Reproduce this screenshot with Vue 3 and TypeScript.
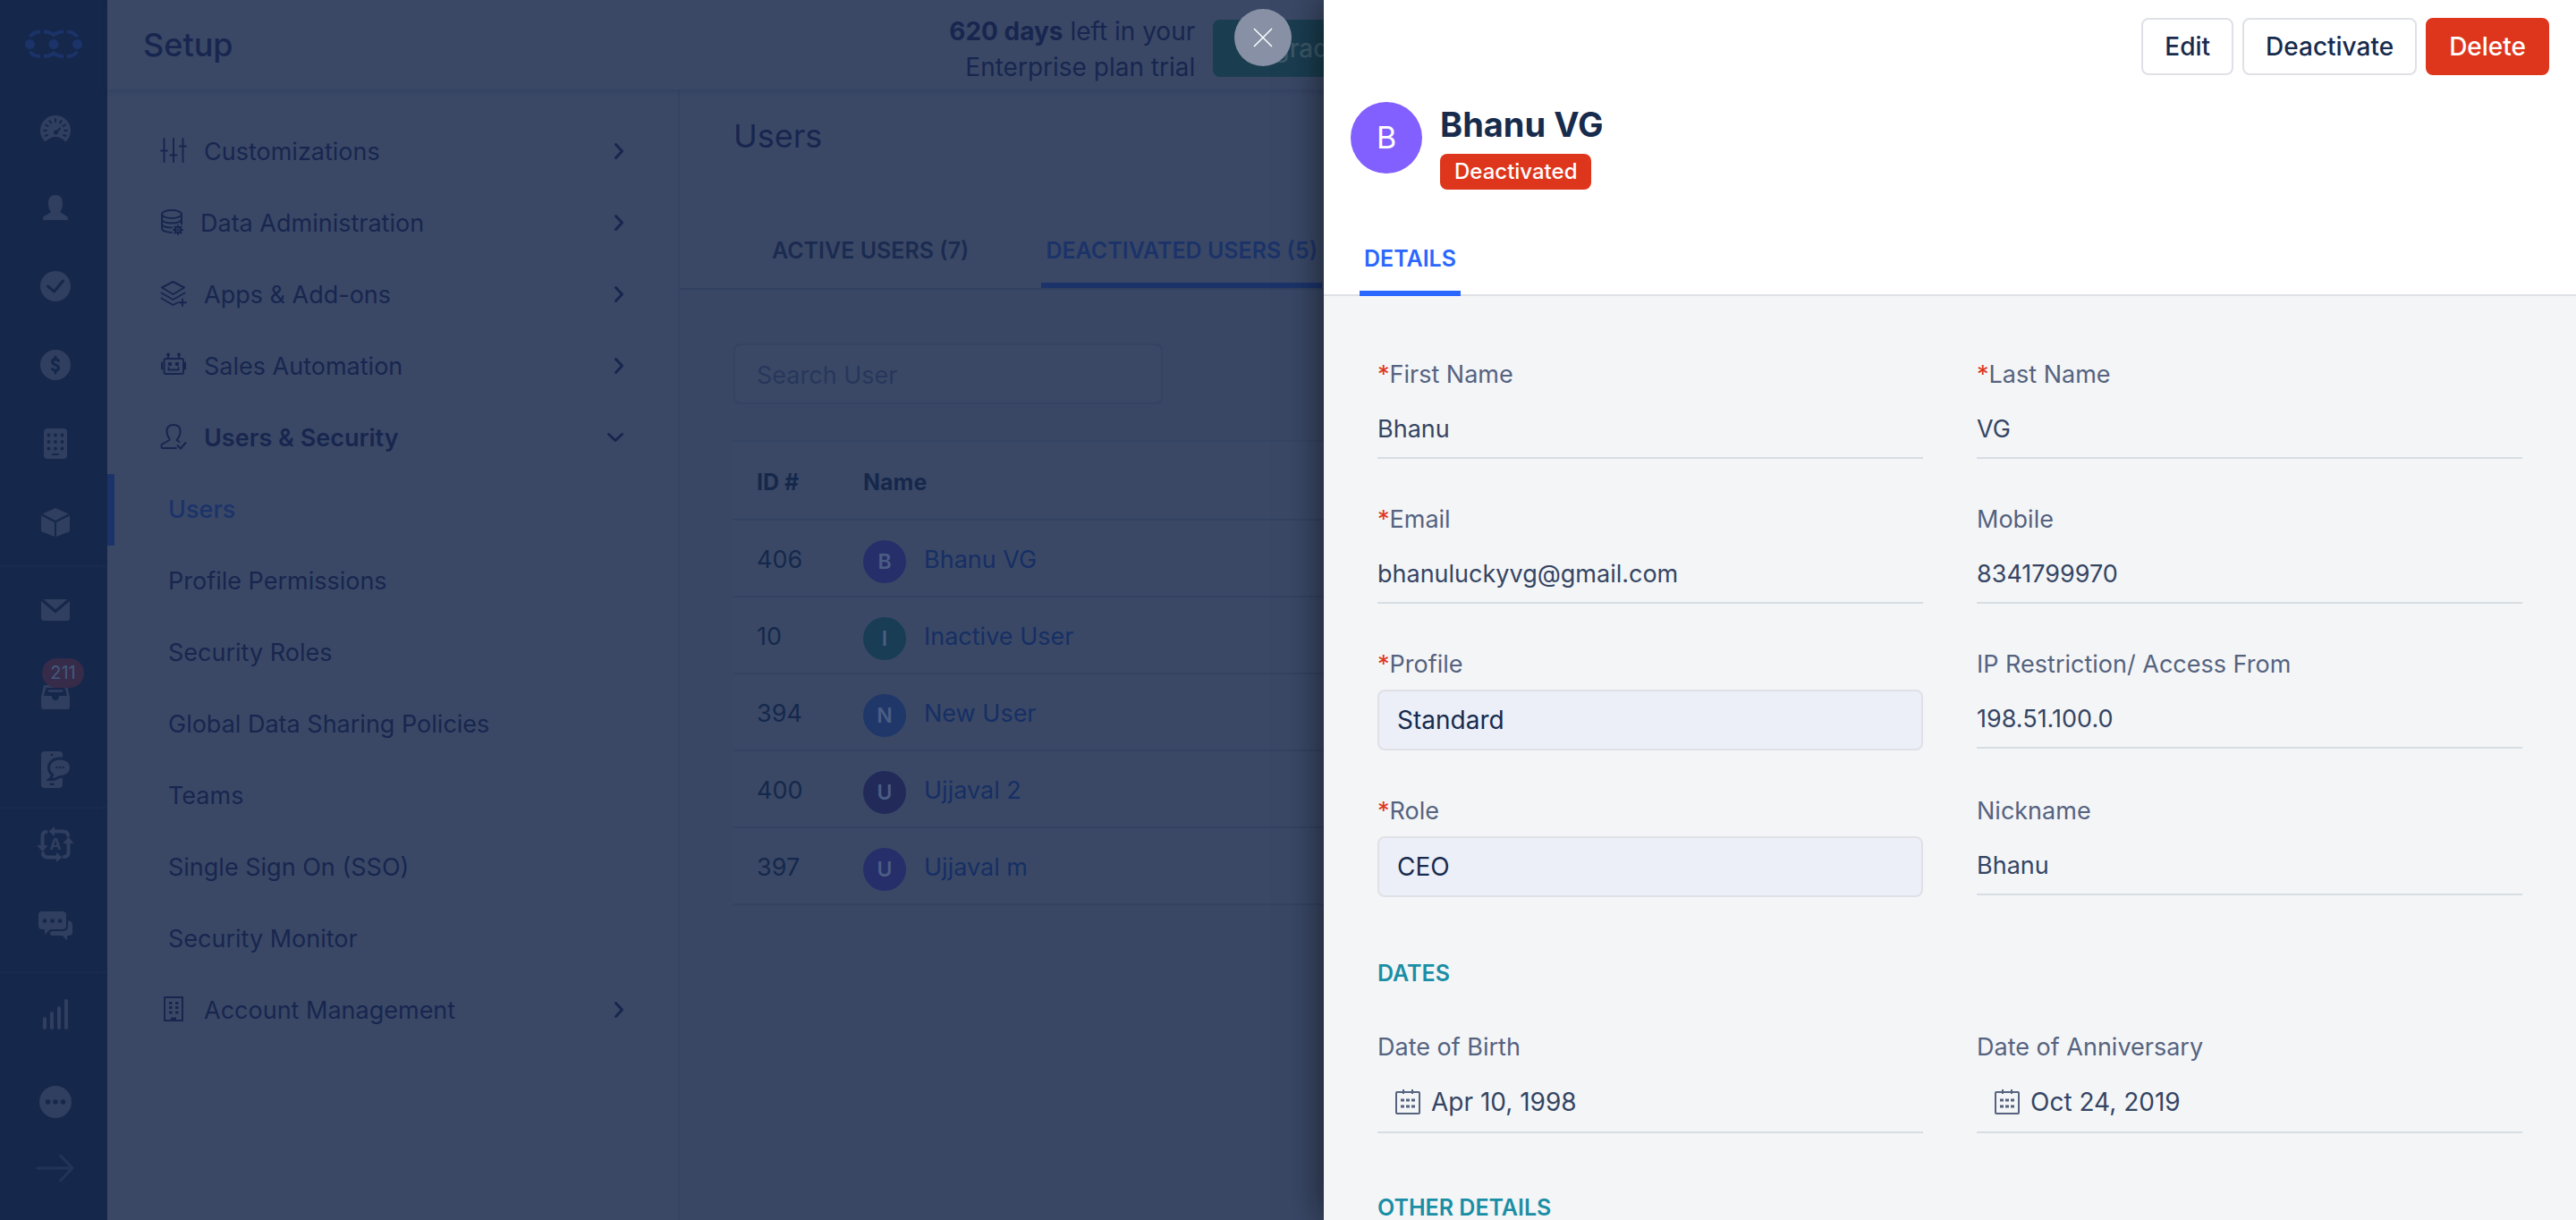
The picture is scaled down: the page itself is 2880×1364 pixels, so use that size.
<script setup lang="ts">
import { ref } from 'vue'

interface UserRow {
  id: number
  name: string
  tone: string
}

interface Field {
  id: string
  label: string
  value: string
  required?: boolean
  kind: 'text' | 'select' | 'date'
}

const securityLinks: string[] = [
  'Users',
  'Profile Permissions',
  'Security Roles',
  'Global Data Sharing Policies',
  'Teams',
  'Single Sign On (SSO)',
  'Security Monitor',
]

const users: UserRow[] = [
  { id: 406, name: 'Bhanu VG', tone: 'violet' },
  { id: 10, name: 'Inactive User', tone: 'teal' },
  { id: 394, name: 'New User', tone: 'blue' },
  { id: 400, name: 'Ujjaval 2', tone: 'purple' },
  { id: 397, name: 'Ujjaval m', tone: 'violet' },
]

const basics: Field[] = [
  { id: 'first-name', label: 'First Name', value: 'Bhanu', required: true, kind: 'text' },
  { id: 'last-name', label: 'Last Name', value: 'VG', required: true, kind: 'text' },
  { id: 'email', label: 'Email', value: 'bhanuluckyvg@gmail.com', required: true, kind: 'text' },
  { id: 'mobile', label: 'Mobile', value: '8341799970', kind: 'text' },
  { id: 'profile', label: 'Profile', value: 'Standard', required: true, kind: 'select' },
  { id: 'ip', label: 'IP Restriction/ Access From', value: '198.51.100.0', kind: 'text' },
  { id: 'role', label: 'Role', value: 'CEO', required: true, kind: 'select' },
  { id: 'nickname', label: 'Nickname', value: 'Bhanu', kind: 'text' },
]

const dates: Field[] = [
  { id: 'birth', label: 'Date of Birth', value: 'Apr 10, 1998', kind: 'date' },
  { id: 'anniversary', label: 'Date of Anniversary', value: 'Oct 24, 2019', kind: 'date' },
]

const search = ref('')
</script>

<template>
  <div class="screen">
    <div class="app">
      <nav class="rail" aria-label="Modules">
        <a class="logo" href="#" aria-label="Home">
          <svg width="64" height="34" viewBox="0 0 64 34">
            <g fill="currentColor"><circle cx="5.5" cy="16.500" r="5.500" /><circle cx="32" cy="16.500" r="5.500" /><circle cx="58.500" cy="16.500" r="5.500" /></g>
            <path d="M5.500 8Q10 2.500 17 2.500M21 2.500C27 2.500 29 3.500 32 6C35 3.500 37 2.500 43 2.500M47 2.500Q54 2.500 58.500 8M5.500 25Q10 30 17 30M21 30C27 30 29 29 32 26.500C35 29 37 30 43 30M47 30Q54 30 58.500 25" fill="none" stroke="currentColor" stroke-width="4" />
          </svg>
        </a>
        <div class="group group-main">
          <a href="#" aria-label="Dashboard">
            <svg width="34" height="30" viewBox="0 0 34 30">
              <path d="M5.500 29.500A17 17 0 1 1 28.500 29.500Q17 18.500 5.500 29.500Z" fill="currentColor" />
              <path class="cut" d="M17 4v3M10.500 6l1.500 2.500M23.500 6L22 8.500M6 10.500l2.500 1.500M28 10.500L25.500 12M4 17h3M27 17h3M5.500 23l2.500-1M28.500 23L26 22M18 19l4-4.500" />
              <circle class="hole" cx="17.500" cy="19" r="2.500" />
            </svg>
          </a>
          <a href="#" aria-label="Contacts">
            <svg width="28" height="28" viewBox="0 0 28 28">
              <path d="M6 9C6 3 9 0 14 0s8 3 8 9c0 4-1 8-3 10l8 5q1 .7 1 2v1q0 1-1 1H1q-1 0-1-1v-1q0-1.300 1-2l8-5C7 17 6 13 6 9Z" fill="currentColor" />
            </svg>
          </a>
          <a href="#" aria-label="Tasks">
            <svg width="34" height="34" viewBox="0 0 34 34">
              <circle cx="17" cy="17" r="17" fill="currentColor" />
              <path class="cut thick" d="M8.500 17l7 6 10-12" />
            </svg>
          </a>
          <a href="#" aria-label="Deals">
            <svg width="34" height="34" viewBox="0 0 34 34">
              <circle cx="17" cy="17" r="17" fill="currentColor" />
              <path class="cut thick" d="M20.500 12.500Q19.500 10.800 17 10.800C14.500 10.800 13.500 12.300 13.500 13.700C13.500 17.300 20.500 16.300 20.500 20C20.500 22 19 23.200 17 23.200Q14.500 23.200 13.500 21.500M17 8v2.500M17 23.500v2.500" />
            </svg>
          </a>
          <a href="#" aria-label="Companies">
            <svg width="26" height="34" viewBox="0 0 26 34">
              <rect width="26" height="34" rx="4" fill="currentColor" />
              <g class="hole"><circle v-for="n in 9" :key="n" :cx="5.5 + ((n - 1) % 3) * 7.5" :cy="7.5 + Math.floor((n - 1) / 3) * 7.5" r="1.900" /><rect x="9" y="28" width="8" height="2" rx="1" /></g>
            </svg>
          </a>
          <a href="#" aria-label="Products">
            <svg width="32" height="32" viewBox="0 0 32 32" fill="currentColor">
              <path d="M16 0l14.500 6.500L16 14 1.500 6.500ZM0 8.500l15 7.500v16L1 26.500Q0 26 0 25ZM32 8.500L17 16v16l14-5.500q1-.5 1-1.500Z" />
            </svg>
          </a>
        </div>
        <div class="group group-comm">
          <a href="#" aria-label="Mail">
            <svg width="32" height="24" viewBox="0 0 32 24" fill="currentColor">
              <path d="M2.500 0h27L16 11.500ZM0 2l16 13.500L32 2v19q0 3-3 3H3q-3 0-3-3Z" />
            </svg>
          </a>
          <a href="#" class="inbox" aria-label="Inbox, 211 unread">
            <svg width="32" height="27" viewBox="0 0 32 27">
              <path d="M3 0h26l3 13v11q0 3-3 3H3q-3 0-3-3V13Z" fill="currentColor" />
              <path class="hole" d="M5.500 3h21L29 12h-9q0 5-4 5t-4-5H3Z" />
              <path d="M9 6.500h14" stroke="currentColor" stroke-width="2.500" stroke-linecap="round" />
            </svg>
            <span class="count">211</span>
          </a>
          <a href="#" aria-label="Phone">
            <svg width="32" height="41" viewBox="0 0 32 41">
              <rect width="24" height="41" rx="4" fill="currentColor" />
              <circle class="hole" cx="12" cy="4" r="1.300" /><rect class="hole" x="9.500" y="35.500" width="5" height="2.500" rx="1.200" />
              <path class="bubble" d="M21 9.500c7 0 11 4 11 8.500s-4 9-10 9q-3 0-4.500 1.500-2.500 1.500-5 1.500 2-2 1.500-4.500C11.500 24 10 21.500 10 18c0-4.500 4.500-8.500 11-8.500Z" fill="currentColor" />
              <g class="hole"><circle cx="17.500" cy="18" r="1.200" /><circle cx="21" cy="18" r="1.200" /><circle cx="24.500" cy="18" r="1.200" /></g>
            </svg>
          </a>
        </div>
        <div class="group group-auto">
          <a href="#" aria-label="Automation">
            <svg width="40" height="40" viewBox="0 0 40 40">
              <g fill="none" stroke="currentColor" stroke-width="4" stroke-linecap="round"><path d="M16 5.500h12q6 0 6 4.500M34.500 17v12q0 5-5 5M24 34.500H12q-6 0-6-4.500M5.500 23V11q0-5 4-5" /></g>
              <path d="M12.500 5.500L19 0v11ZM34.500 11.500L40.500 19h-12ZM27.500 34.500L21 40V29ZM5.500 28.500L-.5 21h12Z" fill="currentColor" />
              <text x="20" y="26" text-anchor="middle" font-size="18" font-weight="700" fill="currentColor">A</text>
            </svg>
          </a>
          <a href="#" aria-label="Chat">
            <svg width="38" height="32" viewBox="0 0 38 32">
              <path d="M4 0h23q4 0 4 4v12q0 4-4 4H13l-6 6v-6H4q-4 0-4-4V4q0-4 4-4ZM33 10.500q5 0 5 4.500v8q0 4-4 4h-2v5.500L26.500 27H16q-3 0-3-2.500t3-2.500h11q6 0 6-6Z" fill="currentColor" />
              <g class="hole"><circle cx="7" cy="10.500" r="2.300" /><circle cx="15.500" cy="10.500" r="2.300" /><circle cx="24" cy="10.500" r="2.300" /></g>
            </svg>
          </a>
        </div>
        <div class="group group-more">
          <a href="#" aria-label="Reports">
            <svg width="28" height="34" viewBox="0 0 28 34"><path d="M2 32V22M10 32V16M18 32V10M26 32V2" stroke="currentColor" stroke-width="4" stroke-linecap="round" /></svg>
          </a>
          <a href="#" aria-label="More">
            <svg width="36" height="36" viewBox="0 0 36 36">
              <circle cx="18" cy="18" r="18" fill="currentColor" />
              <g class="hole"><circle cx="9.500" cy="18" r="2.700" /><circle cx="18" cy="18" r="2.700" /><circle cx="26.500" cy="18" r="2.700" /></g>
            </svg>
          </a>
          <a href="#" class="faint" aria-label="Expand">
            <svg width="40" height="32" viewBox="0 0 40 32"><path d="M0 16h39M25.500 2L39 16 25.500 30" fill="none" stroke="currentColor" stroke-width="3" stroke-linecap="round" stroke-linejoin="round" /></svg>
          </a>
        </div>
      </nav>

      <div class="workspace">
        <header class="topbar">
          <h1>Setup</h1>
          <p class="trial"><strong>620 days</strong> left in your<br />Enterprise plan trial</p>
          <button type="button" class="upgrade">Upgrade</button>
        </header>

        <div class="columns">
          <aside class="menu">
            <a href="#" class="entry">
              <svg width="28" height="28" viewBox="0 0 28 28" class="line"><path d="M3.500 1v26M14 1v26M24.500 1v26M0 14.500h7M10.500 19.500h7M21 9.500h7" /></svg>
              <span>Customizations</span>
              <svg width="10" height="18" viewBox="0 0 10 18" class="chevron"><path d="M1.500 1.500L8.500 9 1.500 16.500" /></svg>
            </a>
            <a href="#" class="entry">
              <svg width="24" height="28" viewBox="0 0 24 28" class="line"><ellipse cx="12" cy="5.500" rx="11" ry="4.500" /><path d="M1 5.500v16c0 2 4.500 4 11 4.500M23 5.500v11M1 11c0 6 22 6 22 0M1 17c1 2 5 3.500 11 3.500" /><circle cx="19" cy="23" r="3.300" /><circle cx="19" cy="23" r=".6" /><path d="M19 18v1.500M19 26.500V28M14 23h1.500M22.500 23H24M15.500 19.500l1 1M21.500 25.500l1 1M22.500 19.500l-1 1M16.500 25.500l-1 1" /></svg>
              <span>Data Administration</span>
              <svg width="10" height="18" viewBox="0 0 10 18" class="chevron"><path d="M1.500 1.500L8.500 9 1.500 16.500" /></svg>
            </a>
            <a href="#" class="entry">
              <svg width="28" height="28" viewBox="0 0 28 28" class="line"><path d="M13.500 1L26 7.500 13.500 15 1 7.500ZM.5 13.500l13 7.500 13-7.500M.5 19.500l13 7.500 4.500-2.500M24 20.500v7.500M20 24.200h8" /></svg>
              <span>Apps &amp; Add-ons</span>
              <svg width="10" height="18" viewBox="0 0 10 18" class="chevron"><path d="M1.500 1.500L8.500 9 1.500 16.500" /></svg>
            </a>
            <a href="#" class="entry">
              <svg width="28" height="28" viewBox="0 0 28 28" class="line"><rect x="3.500" y="7" width="21.500" height="17" rx="2" /><path d="M8 2v5M20 2v5M1 11.500v7M27 11.500v7M8.500 17v2.500h11V17" /><g class="solid"><circle cx="8" cy="2.500" r="1" /><circle cx="20" cy="2.500" r="1" /><circle cx="10" cy="13" r="1.300" /><circle cx="18" cy="13" r="1.300" /></g></svg>
              <span>Sales Automation</span>
              <svg width="10" height="18" viewBox="0 0 10 18" class="chevron"><path d="M1.500 1.500L8.500 9 1.500 16.500" /></svg>
            </a>
            <a href="#" class="entry open">
              <svg width="28" height="28" viewBox="0 0 28 28" class="line"><path d="M17 27H2q-1.500 0-1.500-1.500V24q0-1 1-1.500L9.500 18V16.500C7.500 14 6.500 11.500 6.500 8c0-4 2.500-7 7.500-7s7.500 3 7.500 7c0 4-1.500 7.500-4 10l3 2M18.500 24l3.500 3.500L27.500 21" /></svg>
              <span>Users &amp; Security</span>
              <svg width="18" height="10" viewBox="0 0 18 10" class="chevron"><path d="M1.500 1.500L9 8.500 16.500 1.500" /></svg>
            </a>
            <a v-for="(link, i) in securityLinks" :key="link" href="#" class="entry sub" :class="{ current: i === 0 }">{{ link }}</a>
            <a href="#" class="entry">
              <svg width="28" height="28" viewBox="0 0 28 28" class="line"><rect x="4" y="1" width="20" height="26" /><path class="windows" d="M9 7.500h3.500M16 7.500h3.500M9 12.500h3.500M16 12.500h3.500M9 18h3.500M16 18h3.500" /><path class="windows" d="M11 25h6" /></svg>
              <span>Account Management</span>
              <svg width="10" height="18" viewBox="0 0 10 18" class="chevron"><path d="M1.500 1.500L8.500 9 1.500 16.500" /></svg>
            </a>
          </aside>

          <main class="page">
            <div class="page-head">
              <h2>Users</h2>
              <div class="tabs" role="tablist">
                <button type="button" role="tab" aria-selected="false">ACTIVE USERS (7)</button>
                <button type="button" role="tab" aria-selected="true" class="active">DEACTIVATED USERS (5)</button>
              </div>
            </div>
            <div class="page-body">
              <input v-model="search" class="search" type="text" placeholder="Search User" aria-label="Search User" />
              <table class="users">
                <thead>
                  <tr><th class="col-id" scope="col">ID #</th><th scope="col">Name</th></tr>
                </thead>
                <tbody>
                  <tr v-for="user in users" :key="user.id">
                    <td class="col-id">{{ user.id }}</td>
                    <td>
                      <a href="#" class="person"><span class="avatar" :class="user.tone">{{ user.name.charAt(0) }}</span>{{ user.name }}</a>
                    </td>
                  </tr>
                </tbody>
              </table>
            </div>
          </main>
        </div>
      </div>
    </div>

    <section class="drawer" aria-label="User details">
      <button type="button" class="close" aria-label="Close">
        <svg width="20" height="20" viewBox="0 0 20 20"><path d="M0 0L20 20M20 0L0 20" stroke="#fff" stroke-width="1.500" /></svg>
      </button>
      <div class="drawer-head">
        <div class="actions">
          <button type="button">Edit</button>
          <button type="button">Deactivate</button>
          <button type="button" class="danger">Delete</button>
        </div>
        <div class="identity">
          <span class="portrait">B</span>
          <div>
            <h2>Bhanu VG</h2>
            <span class="status">Deactivated</span>
          </div>
        </div>
        <div class="drawer-tabs" role="tablist">
          <button type="button" role="tab" aria-selected="true">DETAILS</button>
        </div>
      </div>
      <form class="drawer-body" @submit.prevent>
        <div class="fields">
          <div v-for="field in basics" :key="field.id" class="field">
            <label :for="field.id"><span v-if="field.required" class="star">*</span>{{ field.label }}</label>
            <select v-if="field.kind === 'select'" :id="field.id">
              <option>{{ field.value }}</option>
            </select>
            <input v-else :id="field.id" class="value" type="text" readonly :value="field.value" />
          </div>
        </div>
        <h3>DATES</h3>
        <div class="fields">
          <div v-for="field in dates" :key="field.id" class="field">
            <label :for="field.id">{{ field.label }}</label>
            <div class="date">
              <svg width="28" height="28" viewBox="0 0 28 28" fill="none" stroke="#55637f" stroke-width="2">
                <rect x="1" y="3" width="26" height="24" rx="1" /><path d="M9 0v5M19 0v5" />
                <path d="M6 12h4M12 12h4M18 12h4M6 19h4M12 19h4M18 19h4" stroke-width="3" />
              </svg>
              <input :id="field.id" type="text" readonly :value="field.value" />
            </div>
          </div>
        </div>
        <h3>OTHER DETAILS</h3>
      </form>
    </section>
  </div>
</template>

<style>
body {
  margin: 0;
}
</style>

<style scoped>
* {
  box-sizing: border-box;
}

.screen {
  display: flex;
  height: 100vh;
  overflow: hidden;
  font-family: Inter, 'Liberation Sans', sans-serif;
  font-size: 27px;
  line-height: 40px;
  background: #3a4866;
}

h1,
h2,
h3,
p {
  margin: 0;
}

a {
  color: inherit;
  text-decoration: none;
}

button,
input,
select {
  font: inherit;
  color: inherit;
  margin: 0;
}

svg {
  flex: none;
  overflow: visible;
}

.app {
  flex: 1;
  min-width: 0;
  display: flex;
  overflow: hidden;
  color: #18264f;
}

/* module rail */
.rail {
  flex: none;
  width: 120px;
  background: #15284b;
  color: #303e5f;
}

.rail a {
  display: flex;
  align-items: center;
  justify-content: center;
}

.rail .logo {
  height: 100px;
  color: #1b3369;
}

.group {
  display: grid;
  padding-left: 4px;
  border-bottom: 2px solid #1a2a4f;
}

.group-main {
  grid-template-rows: repeat(6, 88px);
  padding-bottom: 4px;
}

.group-comm {
  grid-template-rows: 96px 98px 64px;
  padding-bottom: 10px;
}

.group-auto {
  grid-template-rows: 80px 102px;
}

.group-more {
  grid-template-rows: 92px 104px 44px;
  border-bottom: 0;
}

.rail .faint {
  color: #23345a;
}

.cut {
  fill: none;
  stroke: #15284b;
  stroke-width: 2;
  stroke-linecap: round;
  stroke-linejoin: round;
}

.thick {
  stroke-width: 3;
}

.hole {
  fill: #15284b;
}

.bubble {
  stroke: #15284b;
  stroke-width: 6;
  paint-order: stroke;
}

.inbox {
  position: relative;
}

.count {
  position: absolute;
  top: 6px;
  left: 43px;
  width: 47px;
  border-radius: 17px;
  background: #362b49;
  color: #43597f;
  font-size: 20px;
  line-height: 33px;
  text-align: center;
}

/* header */
.workspace {
  flex: 1;
  min-width: 0;
  display: flex;
  flex-direction: column;
}

.topbar {
  position: relative;
  flex: none;
  height: 100px;
  display: flex;
  align-items: center;
  padding-left: 40px;
  box-shadow: 0 2px 6px rgba(24, 38, 79, 0.2);
}

.topbar h1 {
  margin-right: auto;
  font-size: 36px;
  font-weight: 500;
}

.trial {
  padding-top: 10px;
  margin-right: 20px;
  font-size: 28px;
  text-align: right;
}

.trial strong {
  font-weight: 700;
}

.upgrade {
  flex: none;
  height: 64px;
  margin: 8px -52px 0 0;
  padding: 0 30px;
  border: 0;
  border-radius: 8px;
  background: #1a3d50;
  color: #3c5768;
  font-size: 28px;
  font-weight: 500;
}

.columns {
  flex: 1;
  display: flex;
}

/* setup menu */
.menu {
  flex: none;
  width: 640px;
  padding-top: 30px;
  border-right: 2px solid #364463;
}

.entry {
  display: flex;
  align-items: center;
  height: 80px;
  padding: 0 61px 0 60px;
}

.entry span {
  flex: 1;
  padding-left: 20px;
}

.entry > .line {
  margin-bottom: 4px;
}

.entry > .chevron {
  margin-bottom: 2px;
}

.open {
  font-weight: 600;
}

.sub {
  padding-left: 68px;
}

.current {
  padding-left: 60px;
  border-left: 8px solid #1b3369;
  color: #1b3369;
  font-weight: 500;
}

.line {
  fill: none;
  stroke: currentColor;
  stroke-width: 2;
  stroke-linecap: round;
  stroke-linejoin: round;
}

.solid {
  fill: currentColor;
}

.windows {
  stroke-width: 3;
  stroke-linecap: butt;
}

.chevron {
  fill: none;
  stroke: currentColor;
  stroke-width: 3;
  stroke-linecap: round;
  stroke-linejoin: round;
}

/* users page */
.page {
  flex: 1;
  min-width: 0;
  background: #394765;
}

.page-head {
  padding: 30px 0 0 60px;
  border-bottom: 2px solid #334160;
  background: #3a4866;
}

.page-head h2 {
  font-size: 36px;
  font-weight: 400;
  line-height: 44px;
}

.tabs {
  display: flex;
  gap: 76px;
  margin-top: 62px;
  padding-left: 38px;
}

.tabs button {
  flex: none;
  height: 86px;
  padding: 8px 5px 0;
  border: 0;
  border-bottom: 6px solid transparent;
  background: none;
  color: #1b2b50;
  font-size: 25px;
  font-weight: 600;
  white-space: nowrap;
}

.tabs .active {
  border-color: #1b3369;
  color: #1b3369;
}

.page-body {
  padding: 60px 0 0 60px;
}

.search {
  display: block;
  width: 480px;
  height: 68px;
  padding: 2px 24px 0;
  border: 2px solid #354362;
  border-radius: 8px;
  background: #3a4866;
}

.search::placeholder {
  color: #27375b;
  opacity: 1;
}

.users {
  width: 100%;
  margin-top: 40px;
  border-spacing: 0;
  border-top: 2px solid #364463;
  background: #3a4866;
}

.users th,
.users td {
  height: 86px;
  padding: 4px 0 0;
  border-bottom: 2px solid #344261;
  text-align: left;
}

.users th {
  height: 88px;
  color: #15284b;
  font-size: 25px;
  font-weight: 700;
}

.users .col-id {
  width: 145px;
  padding-left: 26px;
  color: #15284b;
}

.person {
  display: flex;
  align-items: center;
  gap: 20px;
  color: #162f64;
}

.avatar {
  width: 48px;
  height: 48px;
  margin-top: 4px;
  border-radius: 50%;
  color: #4b5d84;
  font-size: 23px;
  font-weight: 600;
  line-height: 48px;
  text-align: center;
}

.violet {
  background: #262f69;
}

.teal {
  background: #183d54;
}

.blue {
  background: #1f3869;
}

.purple {
  background: #222a5a;
}

/* detail drawer */
.drawer {
  position: relative;
  flex: none;
  width: 1400px;
  display: flex;
  flex-direction: column;
  box-shadow: 0 0 40px rgba(0, 0, 0, 0.6);
  background: #f4f5f7;
}

.close {
  position: absolute;
  top: 10px;
  left: -100px;
  width: 64px;
  height: 64px;
  display: flex;
  align-items: center;
  justify-content: center;
  padding: 0;
  border: 0;
  border-radius: 50%;
  background: #8790a4;
}

.drawer-head {
  flex: none;
  padding: 20px 30px 0;
  background: #fff;
  border-bottom: 2px solid #dfe1e6;
}

.actions {
  display: flex;
  justify-content: flex-end;
  gap: 10px;
}

.actions button {
  height: 64px;
  padding: 0 24px;
  border: 2px solid #dfe1e6;
  border-radius: 8px;
  background: #fff;
  color: #172b4d;
  font-size: 28px;
  font-weight: 500;
}

.actions .danger {
  border-color: #de361c;
  background: #de361c;
  color: #fff;
}

.identity {
  display: flex;
  align-items: flex-start;
  gap: 20px;
  margin-top: 30px;
}

.portrait {
  width: 80px;
  height: 80px;
  border-radius: 50%;
  background: #825fff;
  color: #fff;
  font-size: 34px;
  line-height: 80px;
  text-align: center;
}

.identity h2 {
  margin-bottom: 8px;
  color: #172b4d;
  font-size: 38px;
  font-weight: 700;
  line-height: 50px;
}

.status {
  display: block;
  width: max-content;
  padding: 0 16px;
  border-radius: 8px;
  background: #de361c;
  color: #fff;
  font-size: 24px;
  font-weight: 500;
}

.drawer-tabs {
  display: flex;
  padding-left: 10px;
  margin: 34px 0 -2px;
}

.drawer-tabs button {
  height: 85px;
  padding: 6px 5px 0;
  border: 0;
  border-bottom: 6px solid #2a67ff;
  background: none;
  color: #2a67ff;
  font-size: 25px;
  font-weight: 600;
}

.drawer-body {
  flex: 1;
  min-height: 0;
  overflow: hidden;
  padding: 68px 60px 0;
}

.fields {
  display: grid;
  grid-template-columns: 1fr 1fr;
  gap: 48px 60px;
}

.field {
  display: flex;
  flex-direction: column;
  align-items: stretch;
}

.field label {
  margin-bottom: 8px;
  color: #55637f;
}

.star {
  color: #de361c;
}

.value {
  height: 66px;
  padding: 0;
  border: 0;
  border-bottom: 2px solid #d6dde3;
  border-radius: 0;
  background: none;
  color: #344563;
}

select {
  appearance: none;
  height: 68px;
  padding: 0 20px;
  border: 2px solid #dfe1e6;
  border-radius: 8px;
  background: #eceff8;
  color: #172b4d;
  font-size: 28px;
}

.date {
  display: flex;
  align-items: center;
  gap: 12px;
  height: 68px;
  padding-left: 20px;
  border-bottom: 2px solid #d6dde3;
}

.date input {
  flex: 1;
  min-width: 0;
  padding: 0;
  border: 0;
  background: none;
  color: #344563;
  font-size: 28px;
}

h3 {
  margin: 72px 0 50px;
  color: #1a8ea5;
  font-size: 25px;
  font-weight: 600;
  line-height: 26px;
}

h3:last-child {
  margin: 70px 0 0;
}
</style>
